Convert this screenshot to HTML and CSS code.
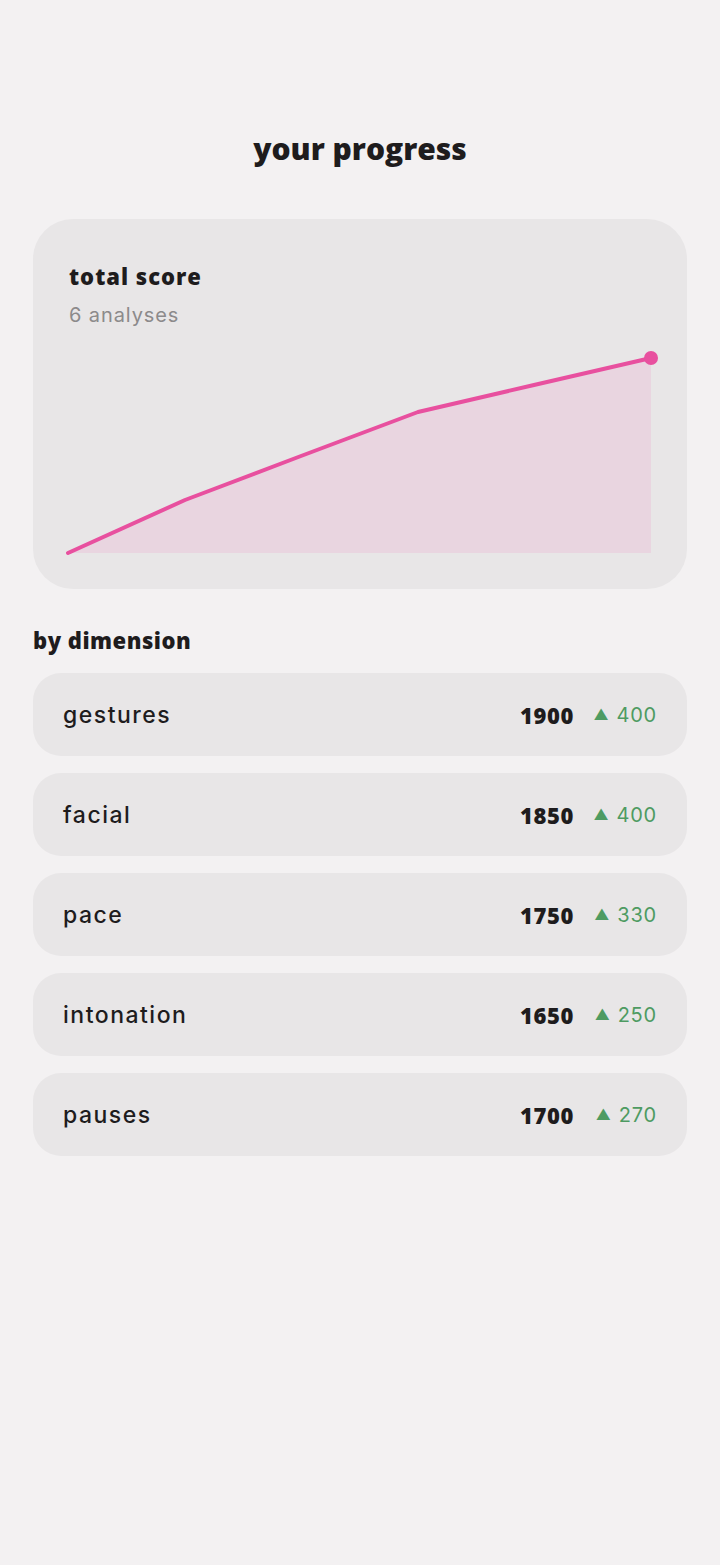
FILE: index.html
```html
<!DOCTYPE html>
<html lang="en">
<head>
  <meta charset="UTF-8">
  <title>Your Progress</title>
  <link rel="stylesheet" href="styles.css">
</head>
<body>
  <div class="page">
    <h1 class="title">your progress</h1>

    <div class="score-card">
      <h2 class="card-title">total score</h2>
      <div class="card-sub">6 analyses</div>
      <svg class="chart" width="583" height="210" viewBox="0 0 583 210">
        <polygon class="chart-area" points="0,204 117,151 233,107 350,63 466,36 583,9 583,204"></polygon>
        <polyline class="chart-line" points="0,204 117,151 233,107 350,63 466,36 583,9"></polyline>
        <circle class="chart-dot" cx="583" cy="9" r="7"></circle>
      </svg>
    </div>

    <h3 class="section-title">by dimension</h3>

    <div class="dim-list">
      <div class="dim-row">
        <span class="dim-name">gestures</span>
        <span class="dim-score">1900</span>
        <span class="dim-delta"><span class="tri">▲</span>400</span>
      </div>
      <div class="dim-row">
        <span class="dim-name">facial</span>
        <span class="dim-score">1850</span>
        <span class="dim-delta"><span class="tri">▲</span>400</span>
      </div>
      <div class="dim-row">
        <span class="dim-name">pace</span>
        <span class="dim-score">1750</span>
        <span class="dim-delta"><span class="tri">▲</span>330</span>
      </div>
      <div class="dim-row">
        <span class="dim-name">intonation</span>
        <span class="dim-score">1650</span>
        <span class="dim-delta"><span class="tri">▲</span>250</span>
      </div>
      <div class="dim-row">
        <span class="dim-name">pauses</span>
        <span class="dim-score">1700</span>
        <span class="dim-delta"><span class="tri">▲</span>270</span>
      </div>
    </div>
  </div>
</body>
</html>
```

FILE: styles.css
```css
body {
  margin: 0;
  background-color: #f3f1f2;
  font-family: Inter, "Noto Sans", sans-serif;
  color: #1e1c1d;
  min-height: 100vh;
}

.page {
  padding: 128px 33px 40px;
}

.title {
  font-family: "Open Sans", sans-serif;
  font-weight: 800;
  font-size: 30px;
  line-height: 42px;
  text-align: center;
  margin: 0 0 49px;
}

.score-card {
  background-color: #e8e6e7;
  border-radius: 40px;
  padding: 42px 36px 31px 35px;
  height: 370px;
  box-sizing: border-box;
}

.card-title {
  font-family: "Open Sans", sans-serif;
  font-weight: 800;
  font-size: 22px;
  line-height: 30px;
  letter-spacing: 1px;
  margin: 0 0 0 1px;
}

.card-sub {
  font-size: 20px;
  line-height: 26px;
  color: #8c8a8b;
  margin: 11px 0 0 1px;
  letter-spacing: 0.9px;
}

.chart {
  display: block;
  overflow: visible;
  margin-top: 21px;
}

.chart-area {
  fill: #e9d5e0;
}

.chart-line {
  fill: none;
  stroke: #e8509f;
  stroke-width: 4;
  stroke-linejoin: round;
  stroke-linecap: round;
}

.chart-dot {
  fill: #e8509f;
}

.section-title {
  font-family: "Open Sans", sans-serif;
  font-weight: 800;
  font-size: 22px;
  line-height: 30px;
  letter-spacing: 0.5px;
  margin: 36px 0 18px;
}

.dim-list {
  display: flex;
  flex-direction: column;
  gap: 17px;
}

.dim-row {
  display: flex;
  align-items: center;
  height: 83px;
  background-color: #e8e6e7;
  border-radius: 28px;
  padding: 0 30px;
}

.dim-name {
  flex: 1;
  font-size: 23px;
  font-weight: 500;
  letter-spacing: 1.5px;
}

.dim-score {
  font-family: "Open Sans", sans-serif;
  font-weight: 800;
  font-size: 22px;
  letter-spacing: 0.6px;
  margin-right: 18px;
}

.dim-delta {
  font-size: 20px;
  color: #4e9b62;
  letter-spacing: 0.8px;
  width: 65px;
  text-align: right;
}

.tri {
  font-size: 15px;
  margin-right: 7px;
  position: relative;
  top: -2px;
}
```
